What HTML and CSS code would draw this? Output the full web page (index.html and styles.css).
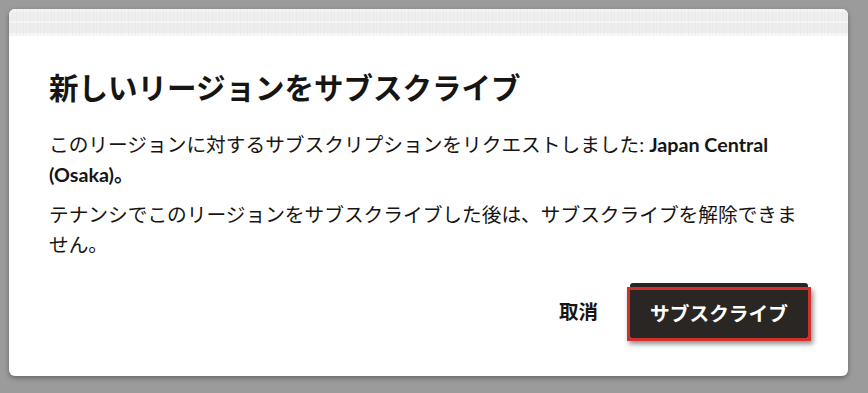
FILE: index.html
```html
<!DOCTYPE html>
<html lang="ja">
<head>
<meta charset="utf-8">
<title>新しいリージョンをサブスクライブ</title>
<link rel="stylesheet" href="styles.css">
</head>
<body>
<div class="dialog">
  <div class="band"></div>
  <div class="content">
    <h1 class="title">新しいリージョンをサブスクライブ</h1>
    <p class="text">このリージョンに対するサブスクリプションをリクエストしました: <b>Japan Central</b> <b>(Osaka)。</b></p>
    <p class="text second">テナンシでこのリージョンをサブスクライブした後は、サブスクライブを解除できません。</p>
    <div class="actions">
      <span class="cancel">取消</span>
      <span class="primary">サブスクライブ<span class="highlight"></span></span>
    </div>
  </div>
</div>
</body>
</html>
```
FILE: styles.css
```css
html, body {
  margin: 0;
  padding: 0;
}
body {
  background: #9b9b9b;
  width: 868px;
  height: 393px;
  overflow: hidden;
  font-family: Lato, "Noto Sans CJK JP", sans-serif;
  color: #161513;
}
.dialog {
  margin: 9px 0 0 9px;
  width: 839px;
  height: 367px;
  background: #ffffff;
  border-radius: 6px;
  overflow: hidden;
  box-shadow: 0 2px 5px rgba(0, 0, 0, 0.35);
  display: flex;
  flex-direction: column;
}
.band {
  height: 27px;
  flex: none;
  background:
    repeating-linear-gradient(90deg, rgba(228,228,228,0.5) 0 1px, rgba(255,255,255,0) 1px 3px, rgba(232,232,232,0.45) 3px 4px, rgba(255,255,255,0) 4px 7px),
    linear-gradient(180deg, #f5f5f5 0 3px, #eeeeee 3px 12px, #f6f6f6 12px 14px, #ededed 14px 24px, #f7f7f7 24px 27px);
}
.content {
  padding: 32px 40px 0 40px;
}
.title {
  margin: 0;
  font-size: 29.5px;
  line-height: 36px;
  font-weight: 700;
  font-family: "Noto Sans CJK JP", sans-serif;
}
.text {
  margin: 26px 0 0 0;
  font-size: 19.7px;
  line-height: 30px;
  font-weight: 400;
}
.text b {
  font-weight: 700;
}
.text.second {
  margin-top: 10px;
}
.actions {
  margin-top: 22px;
  display: flex;
  justify-content: flex-end;
  align-items: center;
  gap: 32px;
}
.cancel {
  font-size: 19.5px;
  font-weight: 700;
  line-height: 56px;
  margin-top: 2px;
}
.primary {
  position: relative;
  width: 178px;
  height: 56px;
  background: #2a2624;
  color: #ffffff;
  border-radius: 3px;
  font-size: 19.7px;
  font-weight: 700;
  display: flex;
  align-items: center;
  justify-content: center;
  padding-top: 2px;
  box-sizing: border-box;
}
.highlight {
  position: absolute;
  top: 4px;
  left: -3px;
  right: -3px;
  bottom: -2px;
  border: 3px solid #d2302c;
  box-shadow: 2px 3px 5px rgba(0, 0, 0, 0.45);
}
```
